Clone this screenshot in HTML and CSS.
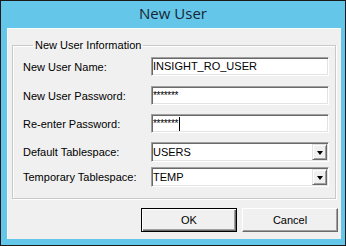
FILE: index.html
```html
<!DOCTYPE html>
<html lang="en">
<head>
    <meta charset="UTF-8">
    <meta name="viewport" content="width=device-width, initial-scale=1.0">
    <title>New User</title>
    <link rel="stylesheet" href="styles.css">
</head>
<body>
    <div class="window">
        <div class="titlebar">New User</div>
        <div class="client">
            <fieldset class="group">
                <legend>New User Information</legend>

                <div class="row first">
                    <label>New User Name:</label>
                    <div class="field">INSIGHT_RO_USER</div>
                </div>
                <div class="row">
                    <label>New User Password:</label>
                    <div class="field pw">*******</div>
                </div>
                <div class="row">
                    <label>Re-enter Password:</label>
                    <div class="field pw">*******<span class="caret"></span></div>
                </div>
                <div class="row">
                    <label>Default Tablespace:</label>
                    <div class="field combo">USERS<span class="drop"><span class="arrow"></span></span></div>
                </div>
                <div class="row tight">
                    <label>Temporary Tablespace:</label>
                    <div class="field combo">TEMP<span class="drop"><span class="arrow"></span></span></div>
                </div>
            </fieldset>

            <div class="buttons">
                <button type="button" class="btn default">OK</button>
                <button type="button" class="btn">Cancel</button>
            </div>
        </div>
    </div>
</body>
</html>
```

FILE: styles.css
```css
body {
    margin: 0;
    padding: 0;
    background-color: #000;
    font-family: "Liberation Sans", Arial, sans-serif;
    font-size: 11px;
    color: #000;
}
.window {
    width: 344px;
    height: 244px;
    border: 1px solid #1a1a1a;
    background-color: #64c6e8;
    display: flex;
    flex-direction: column;
}
.titlebar {
    height: 27px;
    line-height: 25px;
    text-align: center;
    font-family: "Open Sans", "Noto Sans", sans-serif;
    font-size: 15px;
    color: #172636;
}
.client {
    margin: 0 4px 6px 6px;
    flex: 1;
    background-color: #f0f0f0;
    border-left: 1px solid #fbfbfb;
    border-top: 1px solid #fbfbfb;
}
.group {
    margin: 10px 0 0 4px;
    width: 308px;
    padding: 0 4px 11px 10px;
    border: 1px solid #c9c9c9;
    box-shadow: inset 1px 1px #fff, 1px 1px #fff;
}
.group legend {
    margin-left: 10px;
    padding: 0 2px;
    line-height: 12px;
}
.row {
    display: flex;
    align-items: center;
    margin-top: 9px;
}
.row.first {
    margin-top: 6px;
}
.row.first + .row {
    margin-top: 10px;
}
.row.tight {
    margin-top: 5px;
}
.row label {
    width: 128px;
}
.field {
    width: 175px;
    height: 15px;
    line-height: 15px;
    padding-left: 1px;
    background-color: #fff;
    border-top: 1px solid #a0a0a0;
    border-left: 1px solid #a0a0a0;
    border-right: 1px solid #fff;
    border-bottom: 1px solid #fff;
    box-shadow: inset 1px 1px #696969, inset -1px -1px #e3e3e3;
    padding-top: 1px;
    padding-bottom: 1px;
    display: flex;
    align-items: center;
    white-space: nowrap;
}
.field.pw {
    font-size: 10px;
    letter-spacing: -0.3px;
}
.caret {
    display: inline-block;
    width: 1px;
    height: 14px;
    margin-left: 1px;
    background-color: #000;
}
.field.combo {
    height: 16px;
}
.drop {
    margin-left: auto;
    margin-right: 1px;
    width: 13px;
    height: 14px;
    background-color: #f0f0f0;
    border-top: 1px solid #e3e3e3;
    border-left: 1px solid #e3e3e3;
    border-right: 1px solid #696969;
    border-bottom: 1px solid #696969;
    box-shadow: inset 1px 1px #fff, inset -1px -1px #a0a0a0;
    display: flex;
    align-items: center;
    justify-content: center;
}
.arrow {
    width: 0;
    height: 0;
    border-left: 3px solid transparent;
    border-right: 3px solid transparent;
    border-top: 4px solid #000;
    margin-top: 1px;
}
.buttons {
    display: flex;
    justify-content: flex-end;
    gap: 5px;
    margin-top: 9px;
    padding-right: 3px;
}
.btn {
    width: 96px;
    height: 24px;
    padding: 0;
    font-family: "Liberation Sans", Arial, sans-serif;
    font-size: 11px;
    color: #000;
    background-color: #f0f0f0;
    border-top: 1px solid #fff;
    border-left: 1px solid #fff;
    border-right: 1px solid #696969;
    border-bottom: 1px solid #696969;
    box-shadow: inset -1px -1px #a0a0a0;
    border-radius: 0;
}
.btn.default {
    border: 1px solid #000;
    box-shadow: inset 1px 1px #fff, inset -1px -1px #696969, inset -2px -2px #a0a0a0;
}
```
